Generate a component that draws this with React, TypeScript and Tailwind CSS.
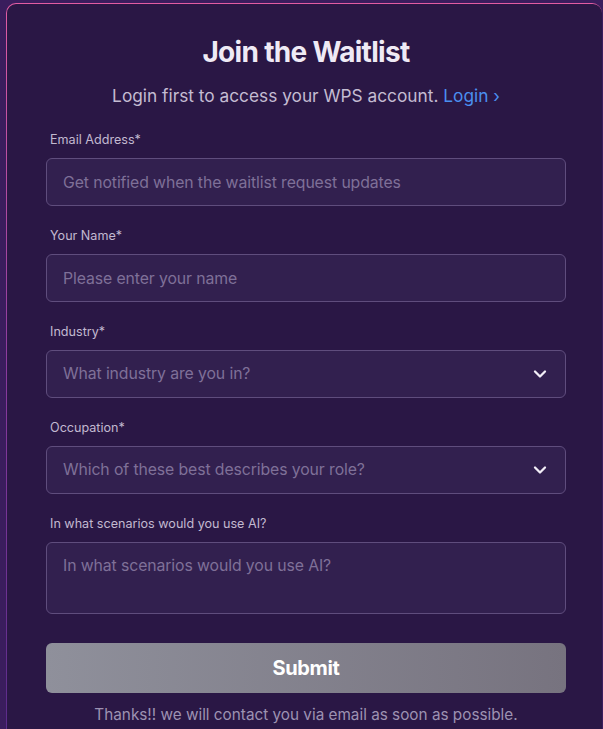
import React from "react";
import { ChevronDown } from "lucide-react";

const font = { fontFamily: "Inter, 'Noto Sans', sans-serif" };

function Label({ children }: { children: React.ReactNode }) {
  return (
    <label className="block pl-1 text-[12.6px] leading-[18px] text-[#c2b9d0] mb-[9px]">
      {children}
    </label>
  );
}

function TextInput({ placeholder }: { placeholder: string }) {
  return (
    <input
      placeholder={placeholder}
      className="w-full h-[48px] rounded-md border border-[#5f4d7d] bg-[#32204f] px-4 text-[15.8px] tracking-[-0.1px] text-[#e8e2f0] placeholder:text-[#7f7098] outline-none"
    />
  );
}

function SelectInput({ placeholder }: { placeholder: string }) {
  return (
    <div className="flex items-center justify-between w-full h-[48px] rounded-md border border-[#5f4d7d] bg-[#32204f] pl-4 pr-[15px]">
      <span className="text-[15.8px] tracking-[-0.1px] text-[#7f7098]">{placeholder}</span>
      <ChevronDown size={20} strokeWidth={2.75} className="text-[#f2eef7]" />
    </div>
  );
}

export default function App() {
  const fields = [
    { label: "Email Address*", placeholder: "Get notified when the waitlist request updates", type: "input" },
    { label: "Your Name*", placeholder: "Please enter your name", type: "input" },
    { label: "Industry*", placeholder: "What industry are you in?", type: "select" },
    { label: "Occupation*", placeholder: "Which of these best describes your role?", type: "select" },
  ];

  return (
    <div className="w-[603px] h-[729px] overflow-hidden bg-[#3a1d5d] pt-[3px] pl-[6px]" style={font}>
      <div className="w-[596px] h-[740px] rounded-t-[10px] bg-gradient-to-b from-[#e25ca3] via-[#8a3a9e] to-[#5a2b8a] pt-px pl-px">
        <div className="h-full rounded-t-[9px] bg-[#2a1745] pt-[30px] pl-[39px] pr-[36px]">
          <h1 className="text-center text-[28px] leading-[36px] font-bold tracking-[-0.7px] text-[#efeaf5]">
            Join the Waitlist
          </h1>
          <p className="mt-[12px] text-center text-[17.3px] leading-[28px] text-[#c4bcd2]">
            Login first to access your WPS account.{" "}
            <span className="text-[#4a8ff0]">Login ›</span>
          </p>

          <div className="mt-[21px] flex flex-col gap-[21px]">
            {fields.map((f) => (
              <div key={f.label}>
                <Label>{f.label}</Label>
                {f.type === "input" ? (
                  <TextInput placeholder={f.placeholder} />
                ) : (
                  <SelectInput placeholder={f.placeholder} />
                )}
              </div>
            ))}
            <div>
              <Label>In what scenarios would you use AI?</Label>
              <textarea
                placeholder="In what scenarios would you use AI?"
                className="block w-full h-[72px] resize-none rounded-md border border-[#5f4d7d] bg-[#32204f] px-4 py-[12px] text-[15.8px] tracking-[-0.1px] leading-[22px] text-[#e8e2f0] placeholder:text-[#7f7098] outline-none"
              />
            </div>
          </div>

          <button className="mt-[29px] w-full h-[50px] rounded-md bg-gradient-to-r from-[#8f909b] to-[#77737f] text-[20px] font-bold tracking-[-0.4px] text-white">
            Submit
          </button>
          <p className="mt-[10px] text-center text-[15.3px] leading-[24px] text-[#9d92b2]">
            Thanks!! we will contact you via email as soon as possible.
          </p>
        </div>
      </div>
    </div>
  );
}
